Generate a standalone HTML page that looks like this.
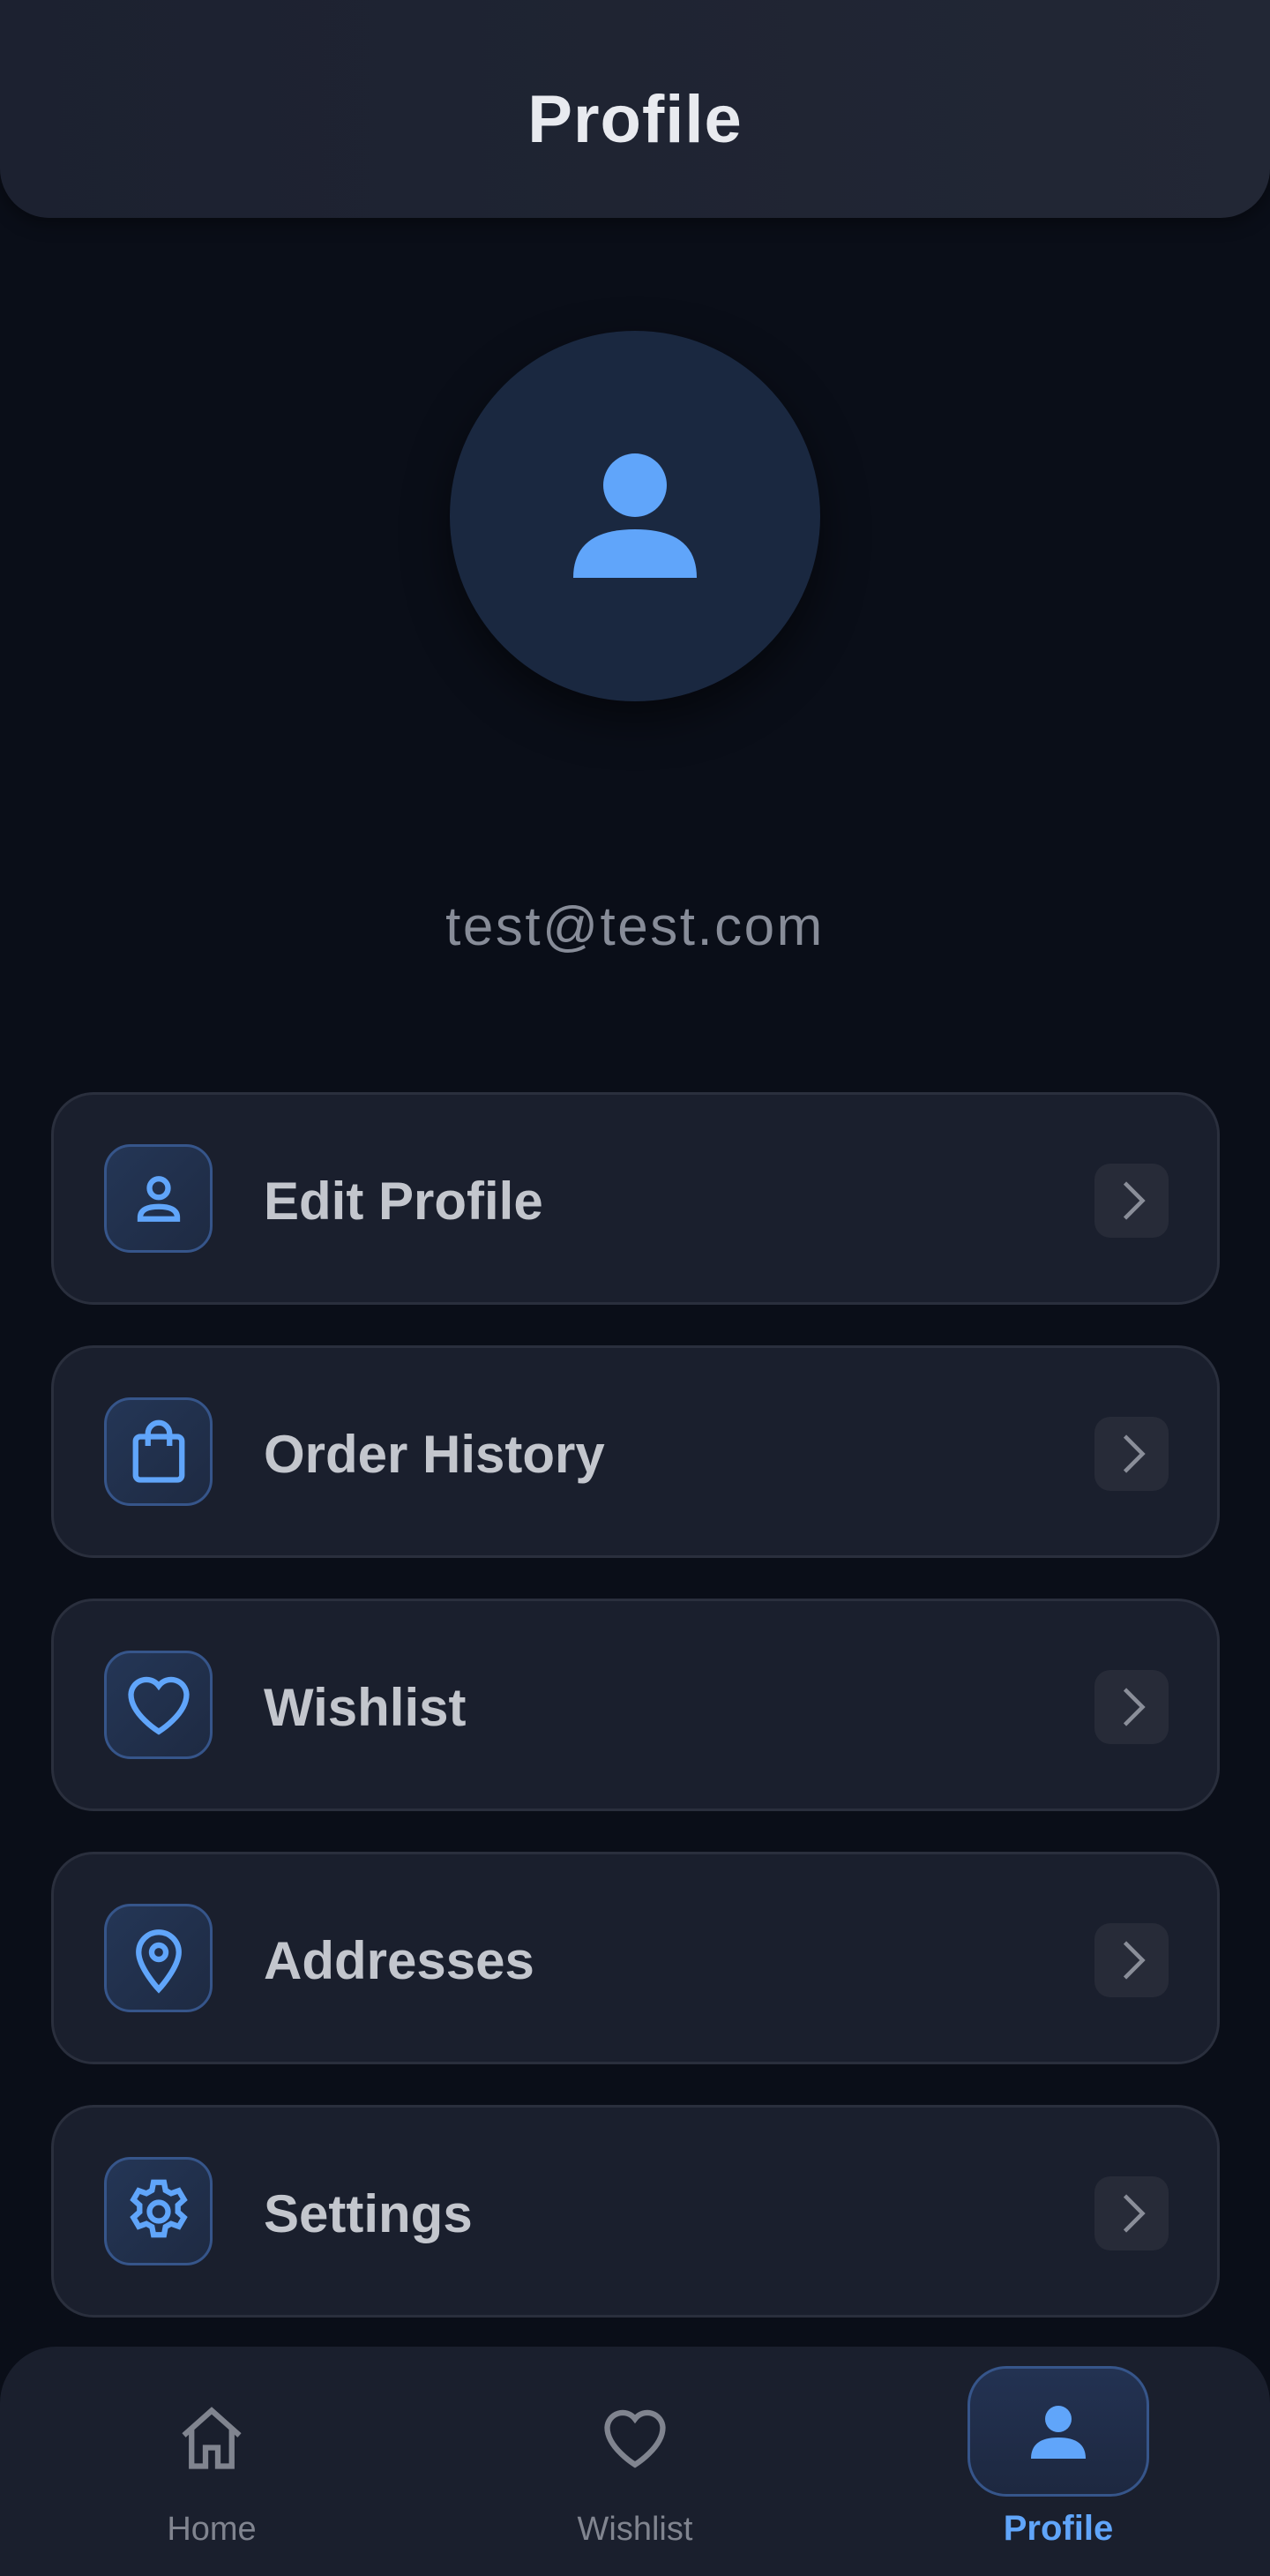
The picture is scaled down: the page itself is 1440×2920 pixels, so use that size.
<!DOCTYPE html>
<html><head><meta charset="utf-8"><style>
*{margin:0;padding:0;box-sizing:border-box}
body{width:1440px;height:2909px;background:#0a0e18;font-family:"Liberation Sans",sans-serif;position:relative;overflow:hidden}
.hdr{position:absolute;left:0;top:0;width:1440px;height:247px;background:linear-gradient(90deg,#1c2130,#222735);border-radius:0 0 56px 56px;box-shadow:0 6px 20px rgba(0,0,0,.4)}
.hdr h1{position:absolute;width:100%;top:92px;text-align:center;color:#e8eaef;font-size:76px;font-weight:bold;letter-spacing:1px}
.av{position:absolute;left:510px;top:375px;width:420px;height:420px;border-radius:50%;background:#1a2840;box-shadow:0 20px 50px rgba(0,0,0,.5)}
.email{position:absolute;width:100%;top:1015px;text-align:center;color:#878c98;font-size:62px;letter-spacing:2.5px}
.card{position:absolute;left:58px;width:1325px;height:241px;background:#1a1f2d;border:3px solid #2a2f3d;border-radius:48px}
.ib{position:absolute;left:57px;top:56px;width:123px;height:123px;border-radius:30px;background:linear-gradient(135deg,#243656,#1e2a42);border:3px solid #36558a}
.ib svg{position:absolute;left:17px;top:17px}
.lbl{position:absolute;left:238px;top:0;line-height:241px;color:#c3c6cd;font-size:60px;font-weight:bold}
.ch{position:absolute;right:55px;top:78px;width:84px;height:84px;border-radius:18px;background:#272b38}
.ch svg{position:absolute;left:12px;top:12px}
.nav{position:absolute;left:0;top:2660px;width:1440px;height:260px;background:#1a1f2d;border-radius:64px 64px 0 0}
.ni{position:absolute;text-align:center;font-size:38px;color:#80848f}
.pill{position:absolute;left:1097px;top:22px;width:206px;height:148px;border-radius:44px;background:linear-gradient(180deg,#233252,#1d2840);border:3px solid #36558a}
</style></head><body>
<div class="hdr"><h1>Profile</h1></div>
<div class="av"><svg width="420" height="420" viewBox="0 0 420 420"><circle cx="210" cy="175" r="36" fill="#60a5fa"/><path d="M140 280 Q140 225 210 225 Q280 225 280 280 Z" fill="#60a5fa"/></svg></div>
<div class="email">test@test.com</div>

<div class="card" style="top:1238px"><div class="ib"><svg width="84" height="84" viewBox="0 0 24 24" fill="none" stroke="#60a5fa" stroke-width="1.8"><circle cx="12" cy="8.5" r="3"/><path d="M6 18.5v-.5C6 15.5 8.5 14.5 12 14.5s6 1 6 3.5v.5z"/></svg></div><div class="lbl">Edit Profile</div><div class="ch"><svg width="60" height="60" viewBox="0 0 24 24" fill="none" stroke="#8a8e99" stroke-width="1.8"><path d="M9 4l8 8-8 8"/></svg></div></div>

<div class="card" style="top:1525px"><div class="ib"><svg width="84" height="84" viewBox="0 0 24 24" fill="none" stroke="#60a5fa" stroke-width="1.8"><rect x="4.5" y="7" width="15" height="14" rx="1.5"/><path d="M8.5 10V6a3.5 3.5 0 0 1 7 0v4"/></svg></div><div class="lbl">Order History</div><div class="ch"><svg width="60" height="60" viewBox="0 0 24 24" fill="none" stroke="#8a8e99" stroke-width="1.8"><path d="M9 4l8 8-8 8"/></svg></div></div>

<div class="card" style="top:1812px"><div class="ib"><svg width="84" height="84" viewBox="0 0 24 24" fill="none" stroke="#60a5fa" stroke-width="1.8"><path d="M12 20.5s-9-5.5-9-12a5 5 0 0 1 9-2.8A5 5 0 0 1 21 8.5c0 6.5-9 12-9 12z"/></svg></div><div class="lbl">Wishlist</div><div class="ch"><svg width="60" height="60" viewBox="0 0 24 24" fill="none" stroke="#8a8e99" stroke-width="1.8"><path d="M9 4l8 8-8 8"/></svg></div></div>

<div class="card" style="top:2099px"><div class="ib"><svg width="84" height="84" viewBox="0 0 24 24" fill="none" stroke="#60a5fa" stroke-width="1.8"><path d="M12 22s-6.5-7-6.5-12a6.5 6.5 0 0 1 13 0c0 5-6.5 12-6.5 12z"/><circle cx="12" cy="10" r="2.3"/></svg></div><div class="lbl">Addresses</div><div class="ch"><svg width="60" height="60" viewBox="0 0 24 24" fill="none" stroke="#8a8e99" stroke-width="1.8"><path d="M9 4l8 8-8 8"/></svg></div></div>

<div class="card" style="top:2386px"><div class="ib"><svg width="84" height="84" viewBox="0 0 24 24" fill="none" stroke="#60a5fa" stroke-width="1.8"><circle cx="12" cy="12" r="3"/><path d="M10.3 2.5h3.4l.5 2.6 1.8 1 2.5-.9 1.7 2.9-2 1.8v2.2l2 1.8-1.7 2.9-2.5-.9-1.8 1-.5 2.6h-3.4l-.5-2.6-1.8-1-2.5.9-1.7-2.9 2-1.8v-2.2l-2-1.8 1.7-2.9 2.5.9 1.8-1z"/></svg></div><div class="lbl">Settings</div><div class="ch"><svg width="60" height="60" viewBox="0 0 24 24" fill="none" stroke="#8a8e99" stroke-width="1.8"><path d="M9 4l8 8-8 8"/></svg></div></div>

<div class="nav">
<div class="ni" style="left:140px;top:62px;width:200px"><svg width="84" height="84" viewBox="0 0 24 24" fill="none" stroke="#80848f" stroke-width="1.8"><path d="M3 11L12 3l9 8M5.5 9v12h4.5v-6h4v6h4.5V9"/></svg><div style="margin-top:30px">Home</div></div>
<div class="ni" style="left:620px;top:62px;width:200px"><svg width="84" height="84" viewBox="0 0 24 24" fill="none" stroke="#80848f" stroke-width="1.8"><path d="M12 20.5s-9-5.5-9-12a5 5 0 0 1 9-2.8A5 5 0 0 1 21 8.5c0 6.5-9 12-9 12z"/></svg><div style="margin-top:30px">Wishlist</div></div>
<div class="pill"><svg width="200" height="142" viewBox="0 0 200 142"><circle cx="100" cy="57" r="15" fill="#60a5fa"/><path d="M69 102 Q69 78 100 78 Q131 78 131 102 Z" fill="#60a5fa"/></svg></div>
<div class="ni" style="left:1100px;top:184px;width:200px;color:#60a5fa;font-weight:bold;font-size:40px">Profile</div>
</div>
</body></html>
